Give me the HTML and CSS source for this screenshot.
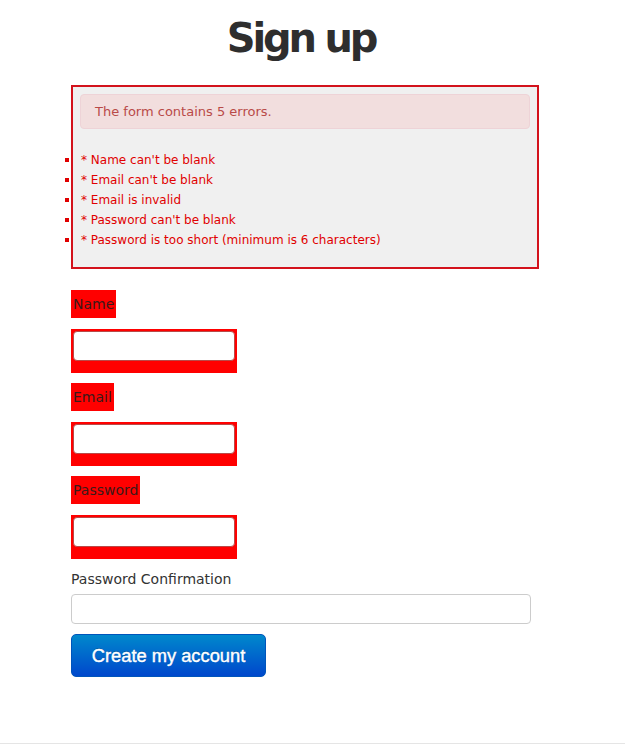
FILE: index.html
```html
<!DOCTYPE html>
<html lang="en">
<head>
<meta charset="utf-8">
<title>Sign up</title>
<link rel="stylesheet" href="styles.css">
</head>
<body>
<div class="page">
  <h1 class="title">Sign up</h1>
  <form class="signup-form">
    <div class="errors">
      <div class="alert">The form contains 5 errors.</div>
      <ul class="error-list">
        <li>* Name can't be blank</li>
        <li>* Email can't be blank</li>
        <li>* Email is invalid</li>
        <li>* Password can't be blank</li>
        <li>* Password is too short (minimum is 6 characters)</li>
      </ul>
    </div>

    <div class="field-error label-wrap"><label class="err-label">Name</label></div>
    <div class="field-error input-wrap"><input class="err-input" type="text"></div>

    <div class="field-error label-wrap"><label class="err-label">Email</label></div>
    <div class="field-error input-wrap"><input class="err-input" type="text"></div>

    <div class="field-error label-wrap"><label class="err-label">Password</label></div>
    <div class="field-error input-wrap"><input class="err-input" type="password"></div>

    <label class="plain-label">Password Confirmation</label>
    <input class="plain-input" type="password">

    <button class="btn-primary" type="button">Create my account</button>
  </form>
</div>
<footer class="footer"></footer>
</body>
</html>
```

FILE: styles.css
```css
html, body {
  margin: 0;
  padding: 0;
  background: #ffffff;
}

body {
  font-family: "DejaVu Sans", Verdana, sans-serif;
  color: #333333;
  font-size: 14px;
}

.page {
  width: 460px;
  margin-left: 71px;
}

.title {
  margin: 0 0 27px;
  padding-top: 18px;
  font-size: 40px;
  line-height: 40px;
  font-weight: bold;
  letter-spacing: -3.2px;
  text-align: center;
  color: #2e2e2e;
}

.signup-form {
  display: flex;
  flex-direction: column;
  align-items: flex-start;
}

.errors {
  box-sizing: border-box;
  width: 468px;
  border: 2px solid #d3121c;
  background: #f0f0f0;
  padding: 7px;
  margin-bottom: 21px;
}

.alert {
  border: 1px solid #eed3d7;
  background: #f2dede;
  border-radius: 4px;
  padding: 8px 14px;
  font-size: 13px;
  line-height: 17px;
  color: #b94a48;
}

.error-list {
  list-style: none;
  margin: 21px 0 10px;
  padding: 0;
  font-size: 12px;
  line-height: 20px;
  color: #e00000;
}

.error-list li {
  display: flex;
  align-items: center;
}

.error-list li::before {
  content: "";
  width: 4px;
  height: 4px;
  background: #e00000;
  margin-left: -15px;
  margin-right: 12px;
  flex: none;
}

.field-error {
  background: #ff0000;
  padding: 2px;
}

.label-wrap {
  margin-bottom: 11px;
}

.input-wrap {
  margin-bottom: 10px;
}

.err-label {
  display: block;
  line-height: 24px;
  color: #3a1a1a;
}

.err-input {
  display: block;
  box-sizing: border-box;
  width: 162px;
  height: 30px;
  margin: 0 0 10px;
  border: 1px solid #b94a48;
  border-radius: 4px;
  background: #ffffff;
}

.plain-label {
  display: block;
  line-height: 20px;
  margin-bottom: 5px;
  color: #333333;
}

.plain-input {
  display: block;
  box-sizing: border-box;
  width: 460px;
  height: 30px;
  margin: 0 0 10px;
  border: 1px solid #cccccc;
  border-radius: 4px;
  background: #ffffff;
}

.btn-primary {
  box-sizing: border-box;
  width: 195px;
  height: 43px;
  border: 1px solid #0055bb;
  border-radius: 5px;
  background: linear-gradient(to bottom, #0088cc, #0047cc);
  color: #ffffff;
  font-family: "Liberation Sans", Arial, sans-serif;
  font-size: 18.3px;
  -webkit-text-stroke: 0.4px #ffffff;
  text-shadow: 0 -1px 0 rgba(0, 0, 0, 0.25);
  padding: 0;
  cursor: pointer;
}

.footer {
  margin-top: 66px;
  border-top: 1px solid #e5e5e5;
  height: 0;
}
```
